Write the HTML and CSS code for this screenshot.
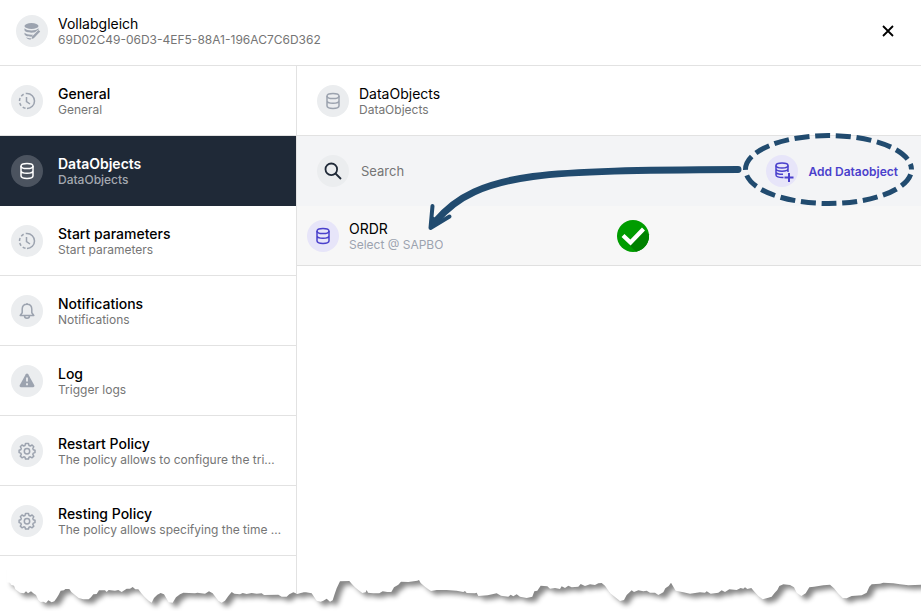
FILE: index.html
```html
<!DOCTYPE html>
<html lang="en">
<head>
    <meta charset="UTF-8">
    <meta name="viewport" content="width=device-width, initial-scale=1.0">
    <title>Vollabgleich</title>
    <link rel="stylesheet" href="styles.css">
</head>
<body>
    <!-- shared icons -->
    <svg class="icon-defs" width="0" height="0">
        <symbol id="icon-db" viewBox="0 0 18 18">
            <g fill="none" stroke="currentColor" stroke-width="1.5">
                <ellipse cx="9" cy="4" rx="6" ry="2.6"/>
                <path d="M3 4v9.800c0 1.500 2.700 2.600 6 2.600s6-1.100 6-2.600V4M3 8.800c0 1.400 2.700 2.500 6 2.500s6-1.100 6-2.500"/>
            </g>
        </symbol>
        <symbol id="icon-clock" viewBox="0 0 18 18">
            <g fill="none" stroke="currentColor" stroke-width="1.5">
                <path d="M9 1.500a7.500 7.500 0 0 1 0 15"/>
                <path d="M9 16.500a7.500 7.500 0 0 1 0-15" stroke-dasharray="3 2.150" stroke-dashoffset="-1.500"/>
                <path d="M8.500 5v4.500l3.500 2.500"/>
            </g>
        </symbol>
        <symbol id="icon-gear" viewBox="0 0 18 18">
            <g fill="none" stroke="currentColor" stroke-width="1.500" stroke-linejoin="round">
                <path d="M7.500 1.500h3l.5 2 1.300.5 1.800-1 1.700 1.700-1 1.800.5 1.200 1.700.5v2.400l-1.700.5-.5 1.300 1 1.700-1.700 1.700-1.800-1-1.300.5-.5 1.700h-3l-.5-1.700-1.200-.5-1.800 1-1.700-1.700 1-1.700-.5-1.300-1.700-.5V8.200l1.700-.5.5-1.200-1-1.800L4 3l1.800 1L7 3.500z"/>
                <circle cx="9" cy="9.200" r="2.700"/>
            </g>
        </symbol>
    </svg>

    <header class="header">
        <span class="badge">
            <svg viewBox="0 0 18 18" width="18" height="18" fill="currentColor">
                <ellipse cx="8.500" cy="4" rx="7" ry="3"/>
                <path d="M1.500 6.300c1.500 1.600 4 2.200 7 2.200s5.500-.6 7-2.200v1.500c-1.300.6-2.400 1.500-3.500 2.500-3.500.9-10 .4-10.500-2.200z"/>
                <path d="M1.500 10.800c1.700 1.500 4.600 2.200 8.500 1.900l-1.400 2c-4 .1-7-.9-7.100-2.600z"/>
                <path d="M3 15.200c1.500.7 3 1 5 1l-.2 1.300c-2 0-4-.8-4.800-2.300z"/>
                <path d="M15.500 8l1.700 1.600-6.400 6.600-2.300.7.600-2.300z"/>
            </svg>
        </span>
        <div class="text">
            <h1 class="title">Vollabgleich</h1>
            <p class="subtitle">69D02C49-06D3-4EF5-88A1-196AC7C6D362</p>
        </div>
        <button class="close-btn" type="button" aria-label="Close">
            <svg viewBox="0 0 12 12" width="12" height="12" fill="none" stroke="currentColor" stroke-width="1.800">
                <path d="M1 1l10 10M11 1L1 11"/>
            </svg>
        </button>
    </header>

    <div class="layout">
        <nav class="sidebar">
            <a class="item" href="#general">
                <span class="badge"><svg width="18" height="18"><use href="#icon-clock"/></svg></span>
                <span class="text">
                    <span class="title">General</span>
                    <span class="subtitle">General</span>
                </span>
            </a>
            <a class="item active" href="#dataobjects">
                <span class="badge"><svg width="18" height="18"><use href="#icon-db"/></svg></span>
                <span class="text">
                    <span class="title">DataObjects</span>
                    <span class="subtitle">DataObjects</span>
                </span>
            </a>
            <a class="item" href="#start-parameters">
                <span class="badge"><svg width="18" height="18"><use href="#icon-clock"/></svg></span>
                <span class="text">
                    <span class="title">Start parameters</span>
                    <span class="subtitle">Start parameters</span>
                </span>
            </a>
            <a class="item" href="#notifications">
                <span class="badge">
                    <svg viewBox="0 0 18 18" width="18" height="18" fill="none" stroke="currentColor" stroke-width="1.500" stroke-linejoin="round">
                        <path d="M9 2.200c-3 0-4.800 2.200-4.800 5v3.600L2.200 13.500h13.600l-2-2.700V7.200c0-2.800-1.800-5-4.800-5zM9 2.200V1M6.500 13.800a2.500 2.500 0 0 0 5 0"/>
                    </svg>
                </span>
                <span class="text">
                    <span class="title">Notifications</span>
                    <span class="subtitle">Notifications</span>
                </span>
            </a>
            <a class="item" href="#log">
                <span class="badge">
                    <svg viewBox="0 0 18 18" width="18" height="18">
                        <path d="M7.800 2.300a1.400 1.400 0 0 1 2.400 0l6.100 10.900a1.400 1.400 0 0 1-1.200 2H2.900a1.400 1.400 0 0 1-1.200-2z" fill="currentColor"/>
                        <path d="M9 5.500v4M9 11.300v2" stroke="#ebedef" stroke-width="1.800"/>
                    </svg>
                </span>
                <span class="text">
                    <span class="title">Log</span>
                    <span class="subtitle">Trigger logs</span>
                </span>
            </a>
            <a class="item" href="#restart-policy">
                <span class="badge"><svg width="18" height="18"><use href="#icon-gear"/></svg></span>
                <span class="text">
                    <span class="title">Restart Policy</span>
                    <span class="subtitle">The policy allows to configure the tri…</span>
                </span>
            </a>
            <a class="item" href="#resting-policy">
                <span class="badge"><svg width="18" height="18"><use href="#icon-gear"/></svg></span>
                <span class="text">
                    <span class="title">Resting Policy</span>
                    <span class="subtitle">The policy allows specifying the time …</span>
                </span>
            </a>
        </nav>

        <main class="content">
            <div class="content-header">
                <span class="badge"><svg width="18" height="18"><use href="#icon-db"/></svg></span>
                <div class="text">
                    <h2 class="title">DataObjects</h2>
                    <p class="subtitle">DataObjects</p>
                </div>
            </div>

            <div class="toolbar">
                <label class="badge search-badge" for="search" aria-label="Search">
                    <svg viewBox="0 0 18 18" width="18" height="18" fill="none" stroke="currentColor" stroke-width="1.800">
                        <circle cx="7.300" cy="7.300" r="5.800"/>
                        <path d="M11.500 11.500l5.500 5.500"/>
                    </svg>
                </label>
                <input class="search" id="search" type="text" placeholder="Search">
                <button class="add-btn" type="button">
                    <span class="badge purple">
                        <svg viewBox="0 0 20 20" width="20" height="20" fill="none" stroke="currentColor" stroke-width="1.500">
                            <ellipse cx="10" cy="4.500" rx="6" ry="2.500"/>
                            <path d="M4 4.500v9.500c0 1.500 2.500 2.700 7.500 2.500M16 4.500v6.500M4 7.800c0 1.400 2.700 2.400 6 2.400s6-1 6-2.400M4 11c0 1.400 2.700 2.400 7 2.300"/>
                            <path d="M17 12v9M12.500 16.500h9" stroke-width="2"/>
                        </svg>
                    </span>
                    Add Dataobject
                </button>
            </div>

            <div class="row">
                <div class="row-main">
                    <span class="badge purple"><svg width="18" height="18"><use href="#icon-db"/></svg></span>
                    <div class="text">
                        <span class="title">ORDR</span>
                        <span class="subtitle">Select @ SAPBO</span>
                    </div>
                </div>
                <div class="row-status">
                    <svg viewBox="0 0 32 32" width="32" height="32">
                        <circle cx="16" cy="16" r="16" fill="#009c00"/>
                        <path d="M27.500 10L32 14.500A16 16 0 0 1 19 31.700L12 25z" fill="#008200"/>
                        <path d="M6 15.500l7.500 7L26.500 9" fill="none" stroke="#fff" stroke-width="4.200"/>
                    </svg>
                </div>
            </div>

            <!-- arrow from the add button to the new row -->
            <svg class="annotation" viewBox="417 126 504 110" width="504" height="110">
                <g fill="none" stroke="#214b6f">
                    <path d="M738 169.500C640 170 575 171 533 176.500C485 183 457 196 436 221" stroke-width="7" stroke-linecap="round"/>
                    <path d="M432.500 206L430.500 228L449.500 216.500" stroke-width="4" stroke-linecap="round" stroke-linejoin="round"/>
                    <path d="M432 216L431 227L441 221z" fill="#214b6f" stroke="none"/>
                    <ellipse cx="828.500" cy="169.500" rx="83" ry="34" stroke-width="5" stroke-dasharray="15 5.700" stroke-dashoffset="-5"/>
                </g>
            </svg>
        </main>
    </div>

    <!-- torn paper edge, only the shadow below the paper is painted -->
    <svg class="torn-edge" viewBox="0 0 2763 123">
        <filter id="torn-shadow" filterUnits="userSpaceOnUse" x="0" y="-60" width="2763" height="183">
            <feGaussianBlur in="SourceAlpha" stdDeviation="8"/>
            <feOffset dx="14" dy="13" result="shadow"/>
            <feFlood flood-color="#000" flood-opacity="0.470"/>
            <feComposite in2="shadow" operator="in"/>
            <feComposite in2="SourceAlpha" operator="out"/>
        </filter>
        <g filter="url(#torn-shadow)">
            <polygon points="20,-60 20,37 30,38 33,44 42,47 46,58 60,68 72,70 78,64 84,70 93,64 100,70 108,75 115,90 122,96 130,95 138,99 145,91 155,97 163,94 170,84 176,74 182,62 192,61 196,57 208,57 214,66 224,74 236,84 250,88 266,88 273,82 280,73 290,72 297,61 315,61 320,66 326,60 345,62 355,60 365,66 373,61 380,56 390,56 398,51 406,58 415,58 424,70 434,81 446,92 455,98 462,84 472,74 482,69 492,73 500,86 506,97 518,98 528,82 540,73 550,68 585,70 592,68 615,71 627,64 638,70 646,80 655,92 665,98 675,92 685,78 695,66 703,71 720,73 728,69 740,72 755,69 770,71 785,70 792,75 835,74 845,80 860,80 868,73 880,67 892,72 910,67 910,-60"/>
            <polygon transform="translate(900 0)" points="0,-60 0,67 18,67 35,70 42,80 50,92 62,95 70,92 80,86 90,95 98,91 104,72 110,55 120,34 148,33 155,41 165,52 175,60 187,69 197,67 200,60 204,68 220,70 238,70 248,64 262,66 274,66 282,52 295,44 303,35 325,36 352,32 357,30 362,39 375,50 385,58 393,63 410,60 440,60 470,62 490,66 495,63 500,69 525,70 530,68 535,78 563,76 590,70 603,77 625,80 632,74 640,79 650,73 660,80 680,84 697,80 703,64 712,62 722,47 742,49 750,56 765,54 780,57 785,49 795,54 805,47 815,52 835,50 842,42 855,48 870,43 885,45 895,40 905,39 915,47 928,66 940,72 940,-60"/>
            <polygon transform="translate(1830 0)" points="0,-60 0,69 14,80 30,93 42,90 50,75 65,61 72,66 85,61 100,64 110,62 120,68 135,68 145,75 160,67 166,55 176,48 183,38 190,50 197,62 220,67 240,71 270,67 285,68 290,64 302,71 325,68 335,61 345,66 358,58 380,60 392,54 400,56 405,52 412,57 424,54 432,64 445,78 458,88 475,83 485,80 493,70 502,60 508,48 520,43 540,45 552,52 560,68 574,78 587,70 598,52 612,50 640,46 660,44 672,55 684,70 698,84 710,85 725,78 755,76 770,68 778,50 785,43 810,41 820,38 850,40 870,43 895,46 933,44 933,-60"/>
        </g>
    </svg>
</body>
</html>
```
FILE: styles.css
```css
* {
    box-sizing: border-box;
}
body {
    display: flex;
    flex-direction: column;
    min-height: 100vh;
    margin: 0;
    background-color: #fff;
    color: #000;
    font-family: Inter, sans-serif;
    font-size: 14px;
}
.icon-defs {
    position: absolute;
}
svg {
    display: block;
    overflow: visible;
}

/* icon circle + two lines of text */
.badge {
    display: flex;
    flex: none;
    align-items: center;
    justify-content: center;
    width: 32px;
    height: 32px;
    border-radius: 50%;
    background-color: #ebedef;
    color: #9ca3af;
}
.badge.purple {
    background-color: #e7e5f9;
    color: #4a40cc;
}
.text {
    display: flex;
    flex-direction: column;
    min-width: 0;
    padding-top: 2px;
}
.title {
    margin: 0;
    font-size: 14px;
    font-weight: 400;
    line-height: 16px;
}
.subtitle {
    margin: 0;
    overflow: hidden;
    color: #757575;
    font-size: 12px;
    line-height: 16px;
    text-overflow: ellipsis;
    white-space: nowrap;
}

.header {
    display: flex;
    align-items: center;
    gap: 10px;
    height: 66px;
    padding: 0 16px 4px;
    border-bottom: 1px solid #e2e2e2;
}
.close-btn {
    margin-left: auto;
    padding: 11px;
    border: none;
    background: none;
    color: #000;
    cursor: pointer;
}

.layout {
    display: flex;
    flex: 1;
}
.sidebar {
    flex: none;
    width: 297px;
    border-right: 1px solid #e2e2e2;
}
.item {
    display: flex;
    align-items: center;
    gap: 15px;
    height: 70px;
    padding: 0 11px;
    border-bottom: 1px solid #e2e2e2;
    color: #000;
    text-decoration: none;
}
.item .title {
    font-weight: 500;
}
.item.active {
    border-color: #1f2937;
    background-color: #1f2937;
    color: #fff;
}
.item.active .title {
    font-weight: 600;
}
.item.active .subtitle {
    color: #a3a8b0;
    font-weight: 500;
}
.item.active .badge {
    background-color: #4b535f;
    color: #fff;
}

.content {
    position: relative;
    flex: 1;
    min-width: 0;
}
.content-header {
    display: flex;
    align-items: center;
    gap: 10px;
    height: 70px;
    padding: 0 20px;
    border-bottom: 1px solid #e2e2e2;
}
.toolbar {
    display: flex;
    align-items: center;
    gap: 12px;
    height: 70px;
    padding: 0 23px 0 20px;
    background-color: #f3f4f6;
}
.search-badge {
    color: #1f2937;
}
.search {
    flex: 1;
    min-width: 0;
    padding: 0;
    border: none;
    outline: none;
    background: none;
    font-family: inherit;
    font-size: 13px;
}
.search::placeholder {
    color: #757575;
}
.add-btn {
    display: flex;
    align-items: center;
    gap: 10px;
    padding: 0;
    border: none;
    background: none;
    color: #4a40cc;
    font-family: inherit;
    font-size: 12px;
    font-weight: 600;
    cursor: pointer;
}
.row {
    display: grid;
    grid-template-columns: 1fr 1fr;
    align-items: center;
    height: 60px;
    border-bottom: 1px solid #e0e0e0;
    background-color: #f7f7f7;
}
.row-main {
    display: flex;
    align-items: center;
    gap: 10px;
    padding-left: 10px;
}
.row-status {
    padding-left: 8px;
}
.row .subtitle {
    color: #9ca3af;
}
.annotation {
    position: absolute;
    top: 60px;
    right: 0;
    pointer-events: none;
}

.torn-edge {
    width: 100%;
    margin-top: -23px;
    overflow: hidden;
}
```
